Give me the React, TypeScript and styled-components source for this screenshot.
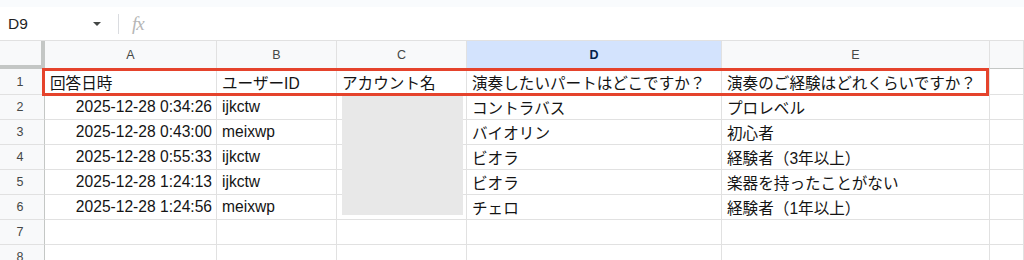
import styled, { createGlobalStyle } from "styled-components";

const GlobalStyle = createGlobalStyle`
  html, body {
    margin: 0;
    padding: 0;
    background: #fff;
  }
  * {
    box-sizing: border-box;
  }
`;

const Page = styled.div`
  width: 1024px;
  height: 260px;
  overflow: hidden;
  background: #fff;
  font-family: "Liberation Sans", "Noto Sans CJK JP", sans-serif;
  color: #1f1f1f;
`;

const TopStrip = styled.div`
  height: 7px;
  background: #f9fbfd;
`;

const FormulaBar = styled.div`
  height: 34px;
  display: flex;
  align-items: center;
  border-bottom: 1px solid #e1e1e1;
`;

const NameBox = styled.div`
  width: 110px;
  display: flex;
  align-items: center;
  justify-content: space-between;
  padding: 0 9px 0 8px;
  font-size: 15.5px;
`;

const Caret = styled.span`
  width: 0;
  height: 0;
  border-left: 4px solid transparent;
  border-right: 4px solid transparent;
  border-top: 4px solid #444746;
`;

const Divider = styled.div`
  width: 1px;
  height: 20px;
  background: #dadce0;
  margin-left: 8px;
`;

const Fx = styled.span`
  margin-left: 13px;
  font-family: "Liberation Serif", serif;
  font-style: italic;
  font-size: 19px;
  color: #b6b6b6;
  letter-spacing: -1px;
`;

const SheetWrap = styled.div`
  position: relative;
`;

const Grid = styled.div`
  display: grid;
  grid-template-columns: 45px 172px 120px 130px 255px 268px 1fr;
  grid-template-rows: 28px 26px repeat(7, 25px);
`;

const Corner = styled.div`
  background: #f8f9fa;
  border-right: 4px solid #c4c7c5;
  border-bottom: 4px solid #c4c7c5;
`;

const ColHead = styled.div<{ $active?: boolean }>`
  display: flex;
  align-items: center;
  justify-content: center;
  font-size: 12.5px;
  background: ${(p) => (p.$active ? "#d3e3fd" : "#f8f9fa")};
  color: ${(p) => (p.$active ? "#041e49" : "#444746")};
  font-weight: ${(p) => (p.$active ? 700 : 400)};
  border-right: 1px solid #e1e1e1;
  border-bottom: 1px solid #c4c7c5;
`;

const RowHead = styled.div`
  display: flex;
  align-items: center;
  justify-content: center;
  padding-right: 4px;
  font-size: 12.5px;
  color: #444746;
  background: #f8f9fa;
  border-right: 1px solid #c4c7c5;
  border-bottom: 1px solid #e1e1e1;
`;

const Cell = styled.div<{ $right?: boolean }>`
  display: flex;
  align-items: center;
  justify-content: ${(p) => (p.$right ? "flex-end" : "flex-start")};
  padding: 0 4px 0 5px;
  font-size: 15.6px;
  color: #141414;
  white-space: nowrap;
  overflow: hidden;
  border-right: 1px solid #e1e1e1;
  border-bottom: 1px solid #e1e1e1;
`;

const Highlight = styled.div`
  position: absolute;
  left: 42px;
  top: 27px;
  width: 947px;
  height: 28px;
  border: 3px solid #e5432c;
  pointer-events: none;
`;

const Redaction = styled.div`
  position: absolute;
  left: 342px;
  top: 54px;
  width: 121px;
  height: 120px;
  background: #e8e8e8;
`;

const headers = ["A", "B", "C", "D", "E", ""];

const titles = [
  "回答日時",
  "ユーザーID",
  "アカウント名",
  "演奏したいパートはどこですか？",
  "演奏のご経験はどれくらいですか？",
];

const rows = [
  ["2025-12-28 0:34:26", "ijkctw", "コントラバス", "プロレベル"],
  ["2025-12-28 0:43:00", "meixwp", "バイオリン", "初心者"],
  ["2025-12-28 0:55:33", "ijkctw", "ビオラ", "経験者（3年以上）"],
  ["2025-12-28 1:24:13", "ijkctw", "ビオラ", "楽器を持ったことがない"],
  ["2025-12-28 1:24:56", "meixwp", "チェロ", "経験者（1年以上）"],
];

export default function App() {
  return (
    <Page>
      <GlobalStyle />
      <TopStrip />
      <FormulaBar>
        <NameBox>
          D9
          <Caret />
        </NameBox>
        <Divider />
        <Fx>fx</Fx>
      </FormulaBar>
      <SheetWrap>
        <Grid>
          <Corner />
          {headers.map((h, i) => (
            <ColHead key={i} $active={h === "D"}>
              {h}
            </ColHead>
          ))}

          <RowHead>1</RowHead>
          {titles.map((t) => (
            <Cell key={t}>{t}</Cell>
          ))}
          <Cell />

          {rows.map((r, i) => (
            <Row key={i} n={i + 2} data={r} />
          ))}

          {[7, 8].map((n) => (
            <Row key={n} n={n} />
          ))}
        </Grid>
        <Redaction />
        <Highlight />
      </SheetWrap>
    </Page>
  );
}

function Row({ n, data }: { n: number; data?: string[] }) {
  return (
    <>
      <RowHead>{n}</RowHead>
      <Cell $right>{data?.[0]}</Cell>
      <Cell>{data?.[1]}</Cell>
      <Cell />
      <Cell>{data?.[2]}</Cell>
      <Cell>{data?.[3]}</Cell>
      <Cell />
    </>
  );
}
